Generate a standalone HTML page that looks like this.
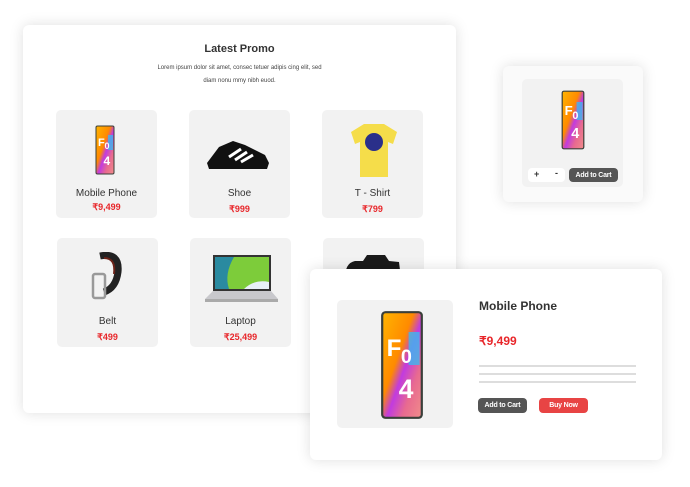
<!DOCTYPE html>
<html><head><meta charset="utf-8"><style>
*{margin:0;padding:0;box-sizing:border-box}
body{width:690px;height:487px;background:#fff;position:relative;overflow:hidden;font-family:"Liberation Sans",sans-serif;color:#333}
.abs{position:absolute}
.card{background:#fff;border-radius:6px;box-shadow:0 0 14px rgba(0,0,0,.13)}
.tile{position:absolute;background:#f2f2f2;border-radius:5px;text-align:center}
.tile .n{position:absolute;left:0;right:0;top:78px;font-size:10px;color:#333}
.tile .p{position:absolute;left:0;right:0;top:94px;font-size:9px;font-weight:bold;color:#e8262a}
.btn{position:absolute;border-radius:4px;color:#fff;font-size:7px;font-weight:bold;text-align:center;letter-spacing:-.2px;display:flex;align-items:center;justify-content:center}
</style></head><body>
<svg width="0" height="0" style="position:absolute"><defs>
<linearGradient id="g" x1="0" y1="0" x2="1" y2="1"><stop offset="0" stop-color="#ffb300"/><stop offset=".4" stop-color="#ff8a00"/><stop offset=".55" stop-color="#c13be0"/><stop offset=".75" stop-color="#e86a90"/><stop offset="1" stop-color="#f08a8a"/></linearGradient>
<symbol id="ph" viewBox="0 0 40 100"><rect x="1" y="1" width="38" height="98" rx="4" fill="#3a3f3a"/><rect x="3" y="3" width="34" height="94" rx="2" fill="url(#g)"/><rect x="26" y="20" width="10" height="30" fill="#3bb8f0" opacity=".8"/><text x="6" y="42" font-family="Liberation Sans" font-weight="bold" font-size="22" fill="#fff">F</text><text x="19" y="48" font-family="Liberation Sans" font-weight="bold" font-size="18" fill="#fff">0</text><text x="17" y="80" font-family="Liberation Sans" font-weight="bold" font-size="24" fill="#fff">4</text></symbol>
</defs></svg>

<div class="card abs" style="left:23px;top:25px;width:433px;height:388px">
<div class="abs" style="left:0;right:0;top:18px;text-align:center;font-size:11px;font-weight:bold;color:#333">Latest Promo</div>
<div class="abs" style="left:0;right:0;top:37px;text-align:center;font-size:6px;line-height:12.5px;color:#444">Lorem ipsum dolor sit amet, consec tetuer adipis cing elit, sed<br>diam nonu mmy nibh euod.</div>
</div>

<div class="tile" style="left:56px;top:110px;width:101px;height:108px"><svg class="abs" style="left:39px;top:13px" width="20" height="54"><use href="#ph"/></svg><div class="n">Mobile Phone</div><div class="p" style="top:92px">₹9,499</div></div>
<div class="tile" style="left:189px;top:110px;width:101px;height:108px"><svg class="abs" style="left:16px;top:25px" width="66" height="36" viewBox="0 0 66 36"><path d="M2 28 L14 12 L28 6 L40 10 L60 20 L64 28 L62 34 L4 34Z" fill="#111"/><path d="M24 22 L36 14 M30 25 L42 17 M36 27 L48 20" stroke="#fff" stroke-width="3"/></svg><div class="n">Shoe</div><div class="p">₹999</div></div>
<div class="tile" style="left:322px;top:110px;width:101px;height:108px"><svg class="abs" style="left:27px;top:12px" width="50" height="56" viewBox="0 0 50 56"><path d="M15 2 L35 2 L48 10 L44 22 L39 20 L39 55 L11 55 L11 20 L6 22 L2 10Z" fill="#f5dd4a"/><circle cx="25" cy="20" r="9" fill="#2a2f8a"/></svg><div class="n">T - Shirt</div><div class="p">₹799</div></div>

<div class="tile" style="left:57px;top:238px;width:101px;height:109px"><svg class="abs" style="left:33px;top:14px" width="34" height="48" viewBox="0 0 34 48"><path d="M10 4 Q30 0 28 20 Q26 36 14 40" stroke="#222" stroke-width="7" fill="none"/><path d="M14 6 Q26 6 24 22" stroke="#6a2218" stroke-width="2" fill="none"/><rect x="3" y="22" width="12" height="24" rx="2" fill="none" stroke="#999" stroke-width="2.5"/></svg><div class="n">Belt</div><div class="p">₹499</div></div>
<div class="tile" style="left:190px;top:238px;width:101px;height:109px"><svg class="abs" style="left:14px;top:16px" width="75" height="52" viewBox="0 0 75 52"><rect x="9" y="1" width="58" height="36" fill="#333"/><rect x="11" y="3" width="54" height="32" fill="#7dcc3a"/><path d="M11 3 L30 3 Q20 20 25 35 L11 35Z" fill="#2a8aa0"/><path d="M40 35 Q50 25 65 28 L65 35Z" fill="#e8f0f8"/><path d="M1 45 L9 37 L67 37 L74 45Z" fill="#c8c8cc"/><rect x="1" y="45" width="73" height="3" fill="#aaa"/></svg><div class="n">Laptop</div><div class="p">₹25,499</div></div>
<div class="tile" style="left:323px;top:238px;width:101px;height:40px"><svg class="abs" style="left:18px;top:15px" width="64" height="25" viewBox="0 0 64 25"><path d="M4 25 Q4 10 14 8 L22 8 L26 2 L44 2 L48 8 L58 9 L60 25Z" fill="#1a1a1a"/></svg></div>

<div class="card abs" style="left:503px;top:66px;width:140px;height:136px;background:#fafafa">
<div class="abs" style="left:19px;top:13px;width:101px;height:108px;background:#f2f2f2;border-radius:5px"></div>
<svg class="abs" style="left:58px;top:20px" width="24" height="68"><use href="#ph"/></svg>
<div class="abs" style="left:25px;top:102px;width:37px;height:14px;background:#fff;border-radius:4px;font-size:9px;font-weight:bold"><span class="abs" style="left:6px;top:1px">+</span><span class="abs" style="left:27px;top:0px">-</span></div>
<div class="btn" style="left:66px;top:102px;width:49px;height:14px;background:#555">Add to Cart</div>
</div>

<div class="card abs" style="left:310px;top:269px;width:352px;height:191px">
<div class="abs" style="left:27px;top:31px;width:116px;height:128px;background:#f2f2f2;border-radius:5px"></div>
<svg class="abs" style="left:70px;top:38px" width="44" height="116"><use href="#ph"/></svg>
<div class="abs" style="left:169px;top:30px;font-size:12px;font-weight:bold;color:#333">Mobile Phone</div>
<div class="abs" style="left:169px;top:65px;font-size:12px;font-weight:bold;color:#e8262a">₹9,499</div>
<div class="abs" style="left:169px;top:96px;width:157px;height:2px;background:#ddd"></div>
<div class="abs" style="left:169px;top:104px;width:157px;height:2px;background:#ddd"></div>
<div class="abs" style="left:169px;top:112px;width:157px;height:2px;background:#ddd"></div>
<div class="btn" style="left:168px;top:129px;width:49px;height:15px;background:#555">Add to Cart</div>
<div class="btn" style="left:229px;top:129px;width:49px;height:15px;background:#e84444">Buy Now</div>
</div>
</body></html>
